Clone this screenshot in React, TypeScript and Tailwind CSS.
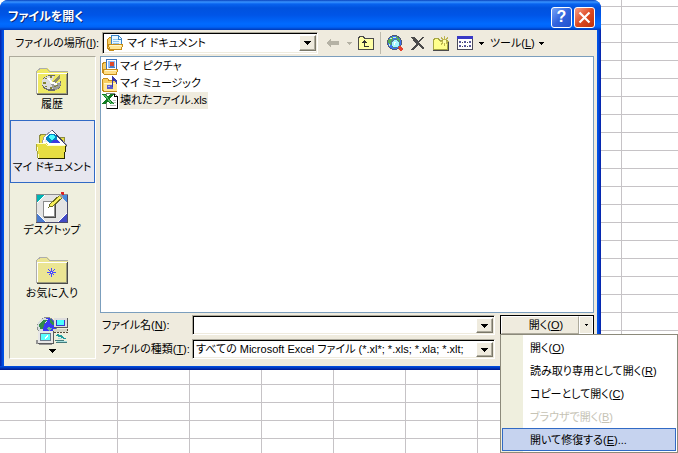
import React, { useState } from "react";
import clsx from "clsx";

const files = [
  { name: "マイ ピクチャ", icon: "pictures" },
  { name: "マイ ミュージック", icon: "music" },
  { name: "壊れたファイル.xls", icon: "excel" },
];

const menuItems = [
  { label: "開く", accessKey: "O" },
  { label: "読み取り専用として開く", accessKey: "R" },
  { label: "コピーとして開く", accessKey: "C" },
  { label: "ブラウザで開く", accessKey: "B", disabled: true },
  { label: "開いて修復する", accessKey: "E", suffix: "..." },
];

const Svg = ({
  w,
  h,
  children,
}: {
  w: number;
  h: number;
  children: React.ReactNode;
}) => (
  <svg
    width={w}
    height={h}
    viewBox={`0 0 ${w} ${h}`}
    shapeRendering="crispEdges"
    className="block shrink-0"
    aria-hidden="true"
  >
    {children}
  </svg>
);

const PlaceFolder = ({ fill }: { fill: string }) => (
  <>
    <path d="M0 28V6l2-3 2-1h7l3 3v1h18v22z" fill={fill} />
    <path d="M.5 28V5.500l2-2 2-1h6l3 3h18" fill="none" stroke="#adadad" />
    <path d="M1.500 27V7.500h29" fill="none" stroke="#fff" />
    <path d="M31.500 7v21.500H1" fill="none" stroke="#4a4a4a" />
    <path d="M30.500 8v19.500H1" fill="none" stroke="#9c9c7b" />
  </>
);

const HistoryIcon = () => (
  <Svg w={32} h={32}>
    <PlaceFolder fill="#efe963" />
    <ellipse cx="15.500" cy="17" rx="10" ry="8" fill="#6b6b6b" />
    <ellipse cx="15" cy="16.500" rx="9" ry="7" fill="#dedede" />
    <path d="M15 17l4-8 6 1v5l-6 3z" fill="#efe963" />
    <path d="M15 17l9-8v3l-5 5z" fill="#8c8c6b" />
    <path d="M15 18l4-1h6l-1 4-4 3-3-1z" fill="#9c9c9c" />
    <path
      d="M14 10h2v2h-2zM7 16h3v2h-3zM14 21h2v2h-2zM20 19h2v1h-2zM9 12h2v1h-2zM9 20h2v1h-2zM18 20h2v1h-2z"
      fill="#848431"
    />
    <path d="M12 12l4 5 5 1" fill="none" stroke="#fff" strokeWidth="2" />
  </Svg>
);

const DocumentsIcon = () => (
  <Svg w={32} h={32}>
    <path d="M3 16V8l2-3h7l3 3h13v9z" fill="#e7de42" stroke="#8c8c42" />
    <path d="M16 1l15 15-3 5-22-7 2-6z" fill="#fff" stroke="#9c9cad" />
    <path d="M16 1l15 16" stroke="#424263" />
    <path d="M16 4l8 9H8l2-4z" fill="#e7e7ef" />
    <path d="M13 5h5l3 3v3l-3 3h-5l-3-3V8z" fill="#0084c6" />
    <path d="M14 6h3l2 2-3 3-3-2z" fill="#4affff" />
    <path d="M17 11h5l2 3h-9z" fill="#3939de" />
    <path d="M0 14h10l2 2h18l-1 14H2z" fill="#e7de42" />
    <path d="M2.500 29L.5 14.500h9l2 2h17" fill="none" stroke="#ffffce" />
    <path d="M29.500 17l-1 12.500H2" fill="none" stroke="#292900" />
    <path d="M2 29L0 15" stroke="#a5a542" />
  </Svg>
);

const DesktopIcon = () => (
  <Svg w={32} h={32}>
    <rect x="0" y="2" width="32" height="29" fill="#8c8c8c" />
    <rect x="1" y="3" width="30" height="27" fill="#e4e4e4" />
    <path d="M1 3h8L1 11z" fill="#00b5b5" />
    <path d="M31 3v8l-8-8z" fill="#4a8cde" />
    <path d="M1 30v-9l9 9z" fill="#4a7bce" />
    <path d="M31 30v-9l-9 9z" fill="#424ac6" />
    <path d="M9 3L1 11M1 21l9 9M22 30l9-9" stroke="#fff" strokeWidth="1" />
    <path d="M0 30.500h31.500V3" fill="none" stroke="#4a4a6b" />
    <rect x="8" y="10" width="12" height="16" fill="#4a4a4a" />
    <rect x="7.500" y="9.500" width="11" height="15" fill="#fff" stroke="#8c8c8c" />
    <path d="M13 15l1-3L24 3l3 2-10 9z" fill="#f7ef5a" stroke="#6b6b21" />
    <path d="M24 3l3 3" stroke="#9c9c9c" strokeWidth="2" />
    <path d="M25 0h3v3h-2z" fill="#de2121" />
  </Svg>
);

const FavoritesIcon = () => (
  <Svg w={32} h={32}>
    <PlaceFolder fill="#ebe594" />
    <path
      d="M15.500 13v9M11 17.500h9M12.500 14.500l6 6M18.500 14.500l-6 6"
      stroke="#4a4aff"
    />
    <rect x="15" y="17" width="1" height="1" fill="#ffffce" />
  </Svg>
);

const NetworkIcon = () => (
  <Svg w={32} h={28}>
    <circle cx="11" cy="10" r="10" fill="#8c8c8c" />
    <circle cx="11" cy="10" r="9" fill="#3939ef" />
    <path d="M1 9l2-5 5-3 4 1-2 4-3 2v6H3z" fill="#d6dede" />
    <path d="M3 8l4-5h4l-3 5-1 4H4zM14 2l5 4-2 3-3-3z" fill="#318c4a" />
    <path d="M12 10l4 1-2 3-3-2z" fill="#6bbd8c" />
    <rect x="18" y="1" width="14" height="10" fill="#5a5a5a" />
    <rect x="18" y="1" width="13" height="9" fill="#dedede" />
    <rect x="20" y="3" width="9" height="6" fill="#3939ce" />
    <rect x="21" y="3" width="7" height="5" fill="#4affff" />
    <rect x="17" y="12" width="14" height="3" fill="#d6d6c6" />
    <path d="M18 15.500h13.500V11" fill="none" stroke="#5a4a39" strokeDasharray="2 1" />
    <rect x="2" y="14" width="16" height="13" fill="#5a5a5a" />
    <rect x="2" y="14" width="15" height="12" fill="#e7e7e7" />
    <rect x="4" y="16" width="11" height="8" fill="#6b7b8c" />
    <rect x="5" y="17" width="9" height="6" fill="#5affff" />
    <path d="M8 21l4-3v2l-3 2z" fill="#fff" />
    <path d="M0 23h2v4h-2zM3 27h13v1h-13z" fill="#949494" />
    <path d="M21 17l4 1 4 3h-3l-6-2zM26 19l5 3h-4z" fill="#219c9c" />
    <path d="M20 25h11v1h-11zM19 23h9v1h-9z" fill="#427b7b" />
    <path d="M21 24h10v1h-10zM22 21h4v1h-4z" fill="#a5dede" />
  </Svg>
);

const MyDocsSmallIcon = () => (
  <Svg w={16} h={16}>
    <path d="M.5 5l2-3h4v13h-4l-2-2z" fill="#f7ce63" stroke="#c68c18" />
    <path d="M4.500 .5h7l3 3V12h-10z" fill="#e7f7ff" stroke="#3984c6" />
    <path d="M6 4h5M6 6h6M6 8h6" stroke="#8cc6ef" />
    <path d="M11.500 1v3h3" fill="none" stroke="#3984c6" />
    <path d="M1.500 9.500h14l-1 5H2.500z" fill="#ffe794" stroke="#c68c18" />
    <path d="M3 10.500h11" stroke="#fff7ce" />
  </Svg>
);

const FileIcon = ({ kind }: { kind: string }) => {
  if (kind === "pictures") {
    return (
      <Svg w={16} h={16}>
        <path d="M.5 5l2-2h3v12h-3l-2-2z" fill="#f7ce63" stroke="#c68c18" />
        <rect x="4.500" y=".5" width="10" height="11" fill="#fff" stroke="#3973bd" />
        <rect x="6" y="2" width="7" height="7" fill="#8cbdf7" />
        <rect x="8" y="3" width="4" height="4" fill="#de4a29" />
        <path d="M6 9l2-2h4l1 2z" fill="#4a7bc6" />
        <path d="M1.500 10.500h14l-1 4.500H2z" fill="#ffde84" stroke="#c68c18" />
        <path d="M3 11.500h11" stroke="#fff7ce" />
      </Svg>
    );
  }
  if (kind === "music") {
    return (
      <Svg w={16} h={16}>
        <path d="M.5 4l1-1.500h4l1 1.500h8v11H1.500l-1-1z" fill="#f7ce63" stroke="#c68c18" />
        <path d="M1.500 7.500h13v7h-13z" fill="#ffe79c" />
        <path d="M1.500 7.500h12" stroke="#fff7ce" />
        <ellipse cx="8" cy="11" rx="3" ry="2.500" fill="#5a5ace" />
        <rect x="6" y="10" width="2" height="1" fill="#b5b5f7" />
        <path d="M10 0h1l1 2 3 2v4h-1V6l-3-1v6h-1z" fill="#3939a5" />
      </Svg>
    );
  }
  return (
    <Svg w={16} h={16}>
      <path d="M4.500 .5h8l3 3v12h-11z" fill="#fff" stroke="#848484" />
      <path d="M15.500 4v11.500H5" fill="none" stroke="#000" />
      <path d="M12.500 .5v3h3" fill="none" stroke="#000" />
      <path d="M11 7h3M11 9h3M8 12h6" stroke="#bdbdbd" />
      <path d="M0 1h4l2 3 2-3h4L8 6l4 5H8L6 8l-2 3H0l4-5z" fill="#107b21" />
      <path d="M1 2h2l6 8h2" fill="none" stroke="#5abd6b" />
    </Svg>
  );
};

const BackIcon = () => (
  <Svg w={13} h={10}>
    <path d="M0 5l5-5v3h8v4H5v3z" fill="#b5b2a5" />
  </Svg>
);

const UpFolderIcon = () => (
  <Svg w={16} h={14}>
    <path d="M.5 13.500v-11l1-2h4l1 2h9v11z" fill="#ffffa5" stroke="#4a4a4a" />
    <path d="M6.500 5v5.500H11" fill="none" stroke="#313131" />
    <path d="M6 4h1v1h1v1h1v1H4V6h1V5h1z" fill="#313131" />
  </Svg>
);

const SearchWebIcon = () => (
  <Svg w={16} h={16}>
    <circle cx="7.500" cy="7.500" r="7.500" fill="#525a73" />
    <circle cx="7.500" cy="7.500" r="6.500" fill="#3973f7" />
    <path d="M1 6l3-4h3L5 6l-1 4H2zM9 1l4 3v3l-3-2zM4 11l3 1v2z" fill="#52ad5a" />
    <path d="M3 3h2v1H3zM6 2h3v1H6zM2 9h1v2H2z" fill="#c6efde" />
    <circle cx="8.500" cy="8.500" r="4.500" fill="#527b94" />
    <circle cx="8.500" cy="8.500" r="3.500" fill="#a5f7ff" />
    <path d="M7 7h2v1H8v2H7z" fill="#fff" />
    <path d="M11 12l2-1 3 3-1 2h-2z" fill="#e7422e" />
  </Svg>
);

const DeleteIcon = () => (
  <Svg w={14} h={13}>
    <path d="M0 0h3l4 4 4-4h2L8 6l5 5v1h-2L7 8l-5 5H0l5-6z" fill="#4a4a4a" />
  </Svg>
);

const NewFolderIcon = () => (
  <Svg w={16} h={15}>
    <path d="M.5 13.500V4.500l1-2h4l1 2h8v9z" fill="#ffff8c" stroke="#a5a542" />
    <path d="M0 14.500h15.500V5" fill="none" stroke="#4a4a4a" />
    <path
      d="M11.500 0v10M7 5h9M8 1.500l7 7M15 1.500l-7 7"
      stroke="#bdb552"
    />
    <path d="M10 4h3v3h-3z" fill="#ffffad" />
  </Svg>
);

const ViewsIcon = () => (
  <Svg w={16} h={14}>
    <rect x=".5" y=".5" width="15" height="13" fill="#fff" stroke="#4a4a5a" />
    <path d="M0 0h16v3h-16z" fill="#3939c6" />
    <path
      d="M2 5h2v2h-2zM7 5h2v2h-2zM12 5h2v2h-2zM2 9h2v2h-2zM7 9h2v2h-2zM12 9h2v2h-2z"
      fill="#5a5a9c"
    />
    <path d="M5 6h1v1h-1zM10 6h1v1h-1zM5 10h1v1h-1zM10 10h1v1h-1z" fill="#4a4a4a" />
  </Svg>
);

const Caret = () => (
  <Svg w={5} h={3}>
    <path d="M0 0h5v1H4v1H3v1H2V2H1V1H0z" fill="currentColor" />
  </Svg>
);

const BigCaret = () => (
  <Svg w={7} h={4}>
    <path d="M0 0h7v1H6v1H5v1H4v1H3V3H2V2H1V1H0z" />
  </Svg>
);

const ComboArrow = () => (
  <span className="flex w-[17px] shrink-0 items-center justify-center self-stretch border border-t-white border-r-[#7b7869] border-b-[#7b7869] border-l-white bg-[#efebde] shadow-[inset_-1px_-1px_#adaa9c]">
    <BigCaret />
  </span>
);

const Combo = ({
  children,
  className,
}: {
  children: React.ReactNode;
  className?: string;
}) => (
  <div
    className={clsx(
      "flex min-w-0 items-center border border-t-[#adaa9c] border-r-white border-b-white border-l-[#adaa9c] bg-white shadow-[inset_1px_1px_#000,inset_-1px_-1px_#efebde]",
      className,
    )}
  >
    {children}
  </div>
);

const Key = ({ children }: { children: React.ReactNode }) => (
  <>
    (<u>{children}</u>)
  </>
);

const places = [
  { name: "履歴", Icon: HistoryIcon },
  { name: "マイ ドキュメント", Icon: DocumentsIcon },
  { name: "デスクトップ", Icon: DesktopIcon },
  { name: "お気に入り", Icon: FavoritesIcon },
];

const TitleBar = () => (
  <div className="flex h-[30px] items-center gap-0.5 rounded-t-lg bg-[linear-gradient(#0842bd_0,#3994ff_2px,#0863ef_4px,#0052de_8px,#0055e7_15px,#006bff_24px,#0063f7_27px,#0039b5_30px)] pt-1 pr-1.5 pl-2">
    <h1 className="flex-1 text-xs leading-4 font-bold text-white [text-shadow:1px_1px_#08297b]">
      ファイルを開く
    </h1>
    <button
      aria-label="ヘルプ"
      className="flex size-[21px] items-center justify-center rounded-[3px] border border-white bg-linear-to-br from-[#7ba5f7] via-[#3163de] to-[#2152ce] text-base leading-none font-bold text-white"
    >
      ?
    </button>
    <button
      aria-label="閉じる"
      className="flex size-[21px] items-center justify-center rounded-[3px] border border-white bg-linear-to-br from-[#f79c84] via-[#de4a21] to-[#bd3108] text-white"
    >
      <svg width="13" height="13" viewBox="0 0 13 13" aria-hidden="true">
        <path d="M1.500 1.500l10 10M11.500 1.500l-10 10" stroke="#fff" strokeWidth="2.200" />
      </svg>
    </button>
  </div>
);

const Toolbar = () => (
  <div className="flex h-[26px] items-center pl-[11px]">
    <label htmlFor="look-in" className="w-[87px] shrink-0 whitespace-nowrap">
      ファイルの場所
      <Key>I</Key>:
    </label>
    <Combo className="h-[22px] w-[216px] p-0.5 pr-px">
      <span className="pl-0.5">
        <MyDocsSmallIcon />
      </span>
      <select
        id="look-in"
        className="min-w-0 flex-1 appearance-none bg-transparent pl-1 outline-none"
      >
        <option>マイ ドキュメント</option>
      </select>
      <ComboArrow />
    </Combo>
    <button aria-label="戻る" className="ml-2 flex items-center gap-2 text-[#b5b2a5]" disabled>
      <BackIcon />
      <Caret />
    </button>
    <button aria-label="1 つ上のフォルダへ" className="ml-1.5">
      <UpFolderIcon />
    </button>
    <span className="mx-1.5 h-[22px] w-px bg-[#bdbaad]" />
    <div className="flex items-center gap-2">
      <button aria-label="Web の検索">
        <SearchWebIcon />
      </button>
      <button aria-label="削除">
        <DeleteIcon />
      </button>
      <button aria-label="新しいフォルダの作成">
        <NewFolderIcon />
      </button>
      <button aria-label="表示" className="flex items-center gap-1.5">
        <ViewsIcon />
        <Caret />
      </button>
    </div>
    <button className="ml-1.5 flex items-center gap-1 whitespace-nowrap">
      <span>
        ツール
        <Key>L</Key>
      </span>
      <Caret />
    </button>
  </div>
);

const PlacesBar = () => {
  const [active, setActive] = useState("マイ ドキュメント");

  return (
    <nav className="flex w-[87px] shrink-0 flex-col border border-t-[#adaa9c] border-r-white border-b-white border-l-[#adaa9c] bg-[#efefde]">
      {places.map(({ name, Icon }) => (
        <button
          key={name}
          onClick={() => setActive(name)}
          className={clsx(
            "flex h-[63px] flex-col items-center border pt-2 pr-px leading-3 whitespace-nowrap",
            active === name
              ? "border-[#316ac5] bg-[#e7e7ef]"
              : "border-transparent",
          )}
        >
          <Icon />
          {name}
        </button>
      ))}
      <button
        aria-label="ネットワーク"
        className="flex flex-col items-center gap-1 pt-2 pr-px pb-1"
      >
        <NetworkIcon />
        <BigCaret />
      </button>
    </nav>
  );
};

const FileList = () => {
  const [selected, setSelected] = useState("壊れたファイル.xls");

  return (
    <ul className="h-[257px] border border-[#7b9ebd] bg-white p-px">
      {files.map((file) => (
        <li key={file.name}>
          <button
            onClick={() => setSelected(file.name)}
            className="flex h-[17px] items-center gap-px"
          >
            <FileIcon kind={file.icon} />
            <span
              className={clsx(
                "px-px leading-[17px]",
                selected === file.name && "bg-[#efebde]",
              )}
            >
              {file.name}
            </span>
          </button>
        </li>
      ))}
    </ul>
  );
};

const OpenMenu = () => {
  const [highlighted, setHighlighted] = useState("E");

  return (
    <div
      role="menu"
      className="absolute top-full -left-px w-[178px] border border-[#8c8a7b] bg-[linear-gradient(90deg,#efefde_22px,#fff_22px)] p-px"
    >
      {menuItems.map((item) => (
        <button
          key={item.accessKey}
          role="menuitem"
          disabled={item.disabled}
          onMouseEnter={() => setHighlighted(item.accessKey)}
          className={clsx(
            "block h-[23px] w-full border pl-[27px] text-left leading-5 whitespace-nowrap",
            highlighted === item.accessKey
              ? "border-[#316ac5] bg-[#c6d3ef]"
              : "border-transparent",
            item.disabled && "text-[#c6c3b5]",
          )}
        >
          {item.label}
          <Key>{item.accessKey}</Key>
          {item.suffix}
        </button>
      ))}
    </div>
  );
};

const OpenButton = () => {
  const [open, setOpen] = useState(true);

  return (
    <div className="relative ml-[5px] flex h-5 border border-black">
      <button className="flex-1 border border-t-white border-r-[#adaa9c] border-b-[#adaa9c] border-l-white pl-3 leading-4">
        開く
        <Key>O</Key>
      </button>
      <button
        aria-label="開く方法"
        onClick={() => setOpen(!open)}
        className="flex w-3.5 items-center justify-center border border-white"
      >
        <Svg w={3} h={2}>
          <path d="M0 0h3v1H2v1H1V1H0z" />
        </Svg>
      </button>
      {open && <OpenMenu />}
    </div>
  );
};

export default function App() {
  const [fileName, setFileName] = useState("");

  return (
    <div className="min-h-screen bg-white bg-[linear-gradient(90deg,#c6c3c6_1px,transparent_1px),linear-gradient(#c6c3c6_1px,transparent_1px)] bg-size-[72px_18px] bg-position-[45px_6px] pr-[77px] font-['Liberation_Sans','Noto_Sans_CJK_JP',sans-serif] text-[11px] text-black [font-feature-settings:'palt']">
      <main className="rounded-t-lg bg-[linear-gradient(90deg,#0821a5,#0052e7_3px,#0052e7_calc(100%-3px),#0821a5)]">
        <TitleBar />
        <div className="mx-1 bg-[#efebde] pr-[3px] pb-[7px]">
          <Toolbar />
          <div className="flex gap-1 pl-[5px]">
            <PlacesBar />
            <div className="min-w-0 flex-1">
              <FileList />
              <div className="mt-0.5 grid grid-cols-[92px_1fr_99px] items-center gap-y-1">
                <label htmlFor="file-name" className="pl-0.5 whitespace-nowrap">
                  ファイル名
                  <Key>N</Key>:
                </label>
                <Combo className="h-5 p-0.5 pr-px pb-px">
                  <input
                    id="file-name"
                    value={fileName}
                    onChange={(e) => setFileName(e.target.value)}
                    className="min-w-0 flex-1 bg-transparent px-0.5 outline-none"
                  />
                  <ComboArrow />
                </Combo>
                <OpenButton />
                <label htmlFor="file-type" className="pl-0.5 whitespace-nowrap">
                  ファイルの種類
                  <Key>T</Key>:
                </label>
                <Combo className="h-5 p-0.5 pr-px pb-px">
                  <select
                    id="file-type"
                    className="min-w-0 flex-1 appearance-none overflow-hidden bg-transparent pl-px outline-none"
                  >
                    <option>
                      すべての Microsoft Excel ファイル (*.xl*; *.xls; *.xla; *.xlt;
                    </option>
                  </select>
                  <ComboArrow />
                </Combo>
              </div>
            </div>
          </div>
        </div>
        <div className="h-1 bg-[linear-gradient(#0052e7,#00188c)]" />
      </main>
    </div>
  );
}
